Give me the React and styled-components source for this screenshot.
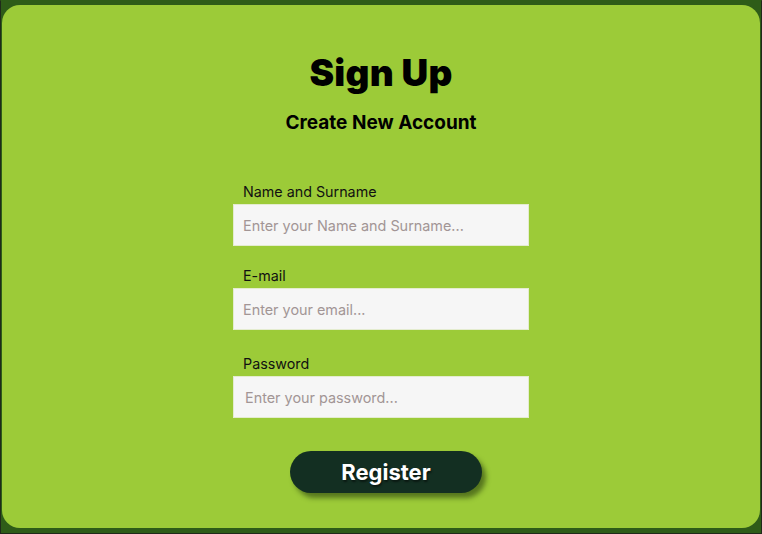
import React from "react";
import styled, { createGlobalStyle } from "styled-components";

const GlobalStyle = createGlobalStyle`
  html, body {
    margin: 0;
    padding: 0;
    height: 100%;
  }
  body {
    background: #2e5c18;
    font-family: Inter, "Noto Sans", sans-serif;
  }
  #root {
    height: 100%;
  }
`;

const Frame = styled.div`
  box-sizing: border-box;
  height: 534px;
  width: 762px;
  border: 1px solid #1f2a1a;
  border-top-color: #2e5c18;
  padding: 4px 1px 5px 1px;
  display: flex;
`;

const Card = styled.main`
  flex: 1;
  background: #9ccb38;
  border-radius: 18px;
  display: flex;
  flex-direction: column;
  align-items: center;
  padding-top: 45px;
`;

const Title = styled.h1`
  margin: 0;
  font-size: 37px;
  font-weight: 900;
  line-height: 46px;
  color: #000;
  letter-spacing: 0.2px;
`;

const Subtitle = styled.h2`
  margin: 16px 0 0;
  font-size: 19px;
  font-weight: 700;
  line-height: 22px;
  color: #000;
`;

const Form = styled.form`
  margin-top: 49px;
  width: 296px;
  display: flex;
  flex-direction: column;
`;

const Field = styled.label`
  display: flex;
  flex-direction: column;
  margin-top: ${(p) => p.$gap || 0}px;
`;

const LabelText = styled.span`
  font-size: 14.3px;
  line-height: 18px;
  color: #111;
  padding-left: 10px;
  margin-bottom: 3px;
`;

const Input = styled.input`
  box-sizing: border-box;
  height: 42px;
  width: 100%;
  border: 1px solid #e4eccf;
  background: #f6f6f6;
  padding: 0 0 0 ${(p) => p.$indent || 9}px;
  font-family: Inter, "Noto Sans", sans-serif;
  font-size: 14.4px;
  color: #333;
  outline: none;

  &::placeholder {
    color: #a29595;
  }
`;

const Register = styled.button`
  align-self: center;
  margin: 33px 0 0 10px;
  width: 192px;
  height: 42px;
  border: none;
  border-radius: 21px;
  background: #132f22;
  color: #fff;
  font-family: Inter, "Noto Sans", sans-serif;
  font-size: 22px;
  font-weight: 700;
  text-shadow: 1px 2px 2px rgba(0, 0, 0, 0.5);
  box-shadow: 4px 5px 5px rgba(30, 50, 10, 0.55);
  cursor: pointer;
`;

export default function App() {
  return (
    <>
      <GlobalStyle />
      <Frame>
        <Card>
          <Title>Sign Up</Title>
          <Subtitle>Create New Account</Subtitle>
          <Form onSubmit={(e) => e.preventDefault()}>
            <Field>
              <LabelText>Name and Surname</LabelText>
              <Input placeholder="Enter your Name and Surname..." />
            </Field>
            <Field $gap={21}>
              <LabelText>E-mail</LabelText>
              <Input type="email" placeholder="Enter your email..." />
            </Field>
            <Field $gap={25}>
              <LabelText>Password</LabelText>
              <Input type="password" $indent={11} placeholder="Enter your password..." />
            </Field>
            <Register type="submit">Register</Register>
          </Form>
        </Card>
      </Frame>
    </>
  );
}
